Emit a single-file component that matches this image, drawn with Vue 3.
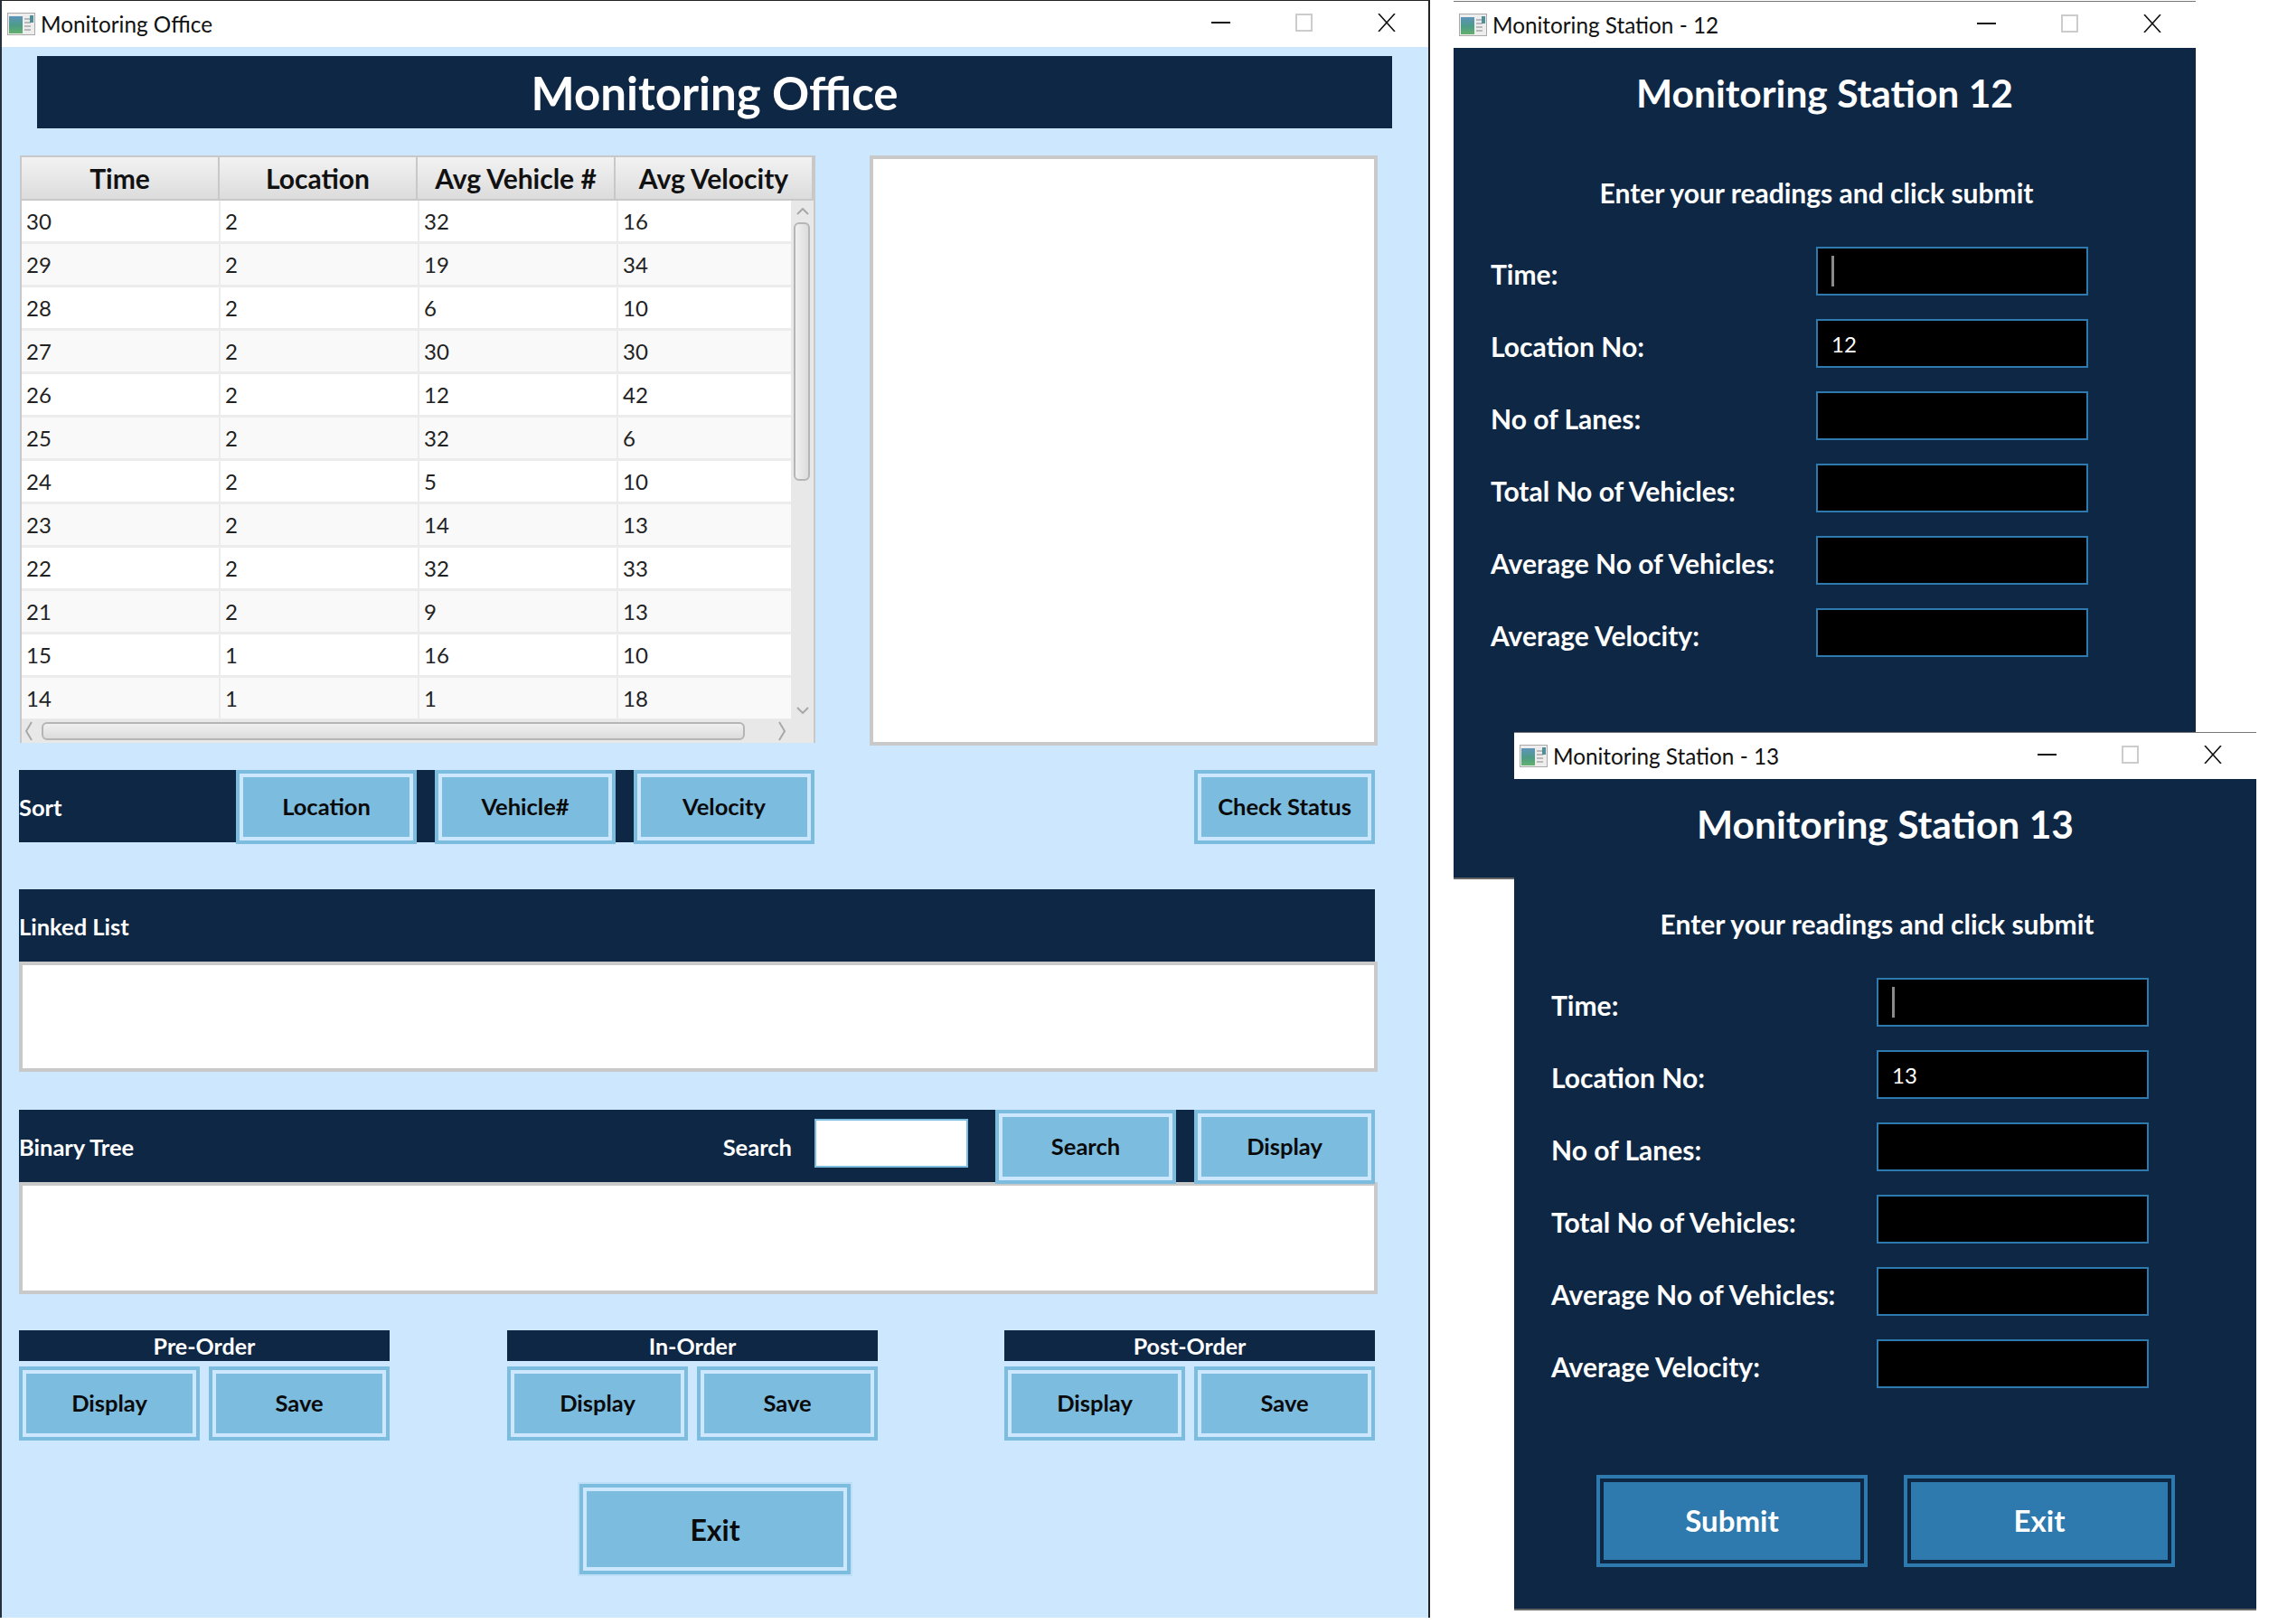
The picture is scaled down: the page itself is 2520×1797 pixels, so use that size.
<template>
  <div class="desktop">
    <!-- Office window -->
    <section class="window office">
      <header class="titlebar">
        <svg class="app-icon" viewBox="0 0 31 25">
          <defs>
            <linearGradient id="icon-fill" x1="0" y1="0" x2="0" y2="1">
              <stop offset="0" stop-color="#5f93bb" />
              <stop offset="0.55" stop-color="#4c9c86" />
              <stop offset="1" stop-color="#63b06d" />
            </linearGradient>
          </defs>
          <rect x="0.5" y="0.5" width="30" height="24" fill="#ededed" stroke="#a9a9a9" />
          <rect x="2" y="4" width="15" height="19" fill="url(#icon-fill)" />
          <path d="M19 7h6M19 11h7M19 15h7M19 19h7" stroke="#b9b9b9" stroke-width="2" />
          <rect x="25" y="3" width="4" height="8" fill="#4f8f9a" />
        </svg>
        <span class="title-text">Monitoring Office</span>
        <div class="controls">
          <span class="ctl"><i class="min"></i></span>
          <span class="ctl"><i class="max"></i></span>
          <span class="ctl">
            <svg class="close" viewBox="0 0 20 20"><path d="M1 0l18 20M19 0L1 20" stroke="#111" stroke-width="1.6" fill="none" /></svg>
          </span>
        </div>
      </header>

      <div class="office-body">
        <div class="banner">Monitoring Office</div>

        <div class="top-row">
          <div class="table">
            <div class="thead">
              <div v-for="h in headers" :key="h" class="th">{{ h }}</div>
            </div>
            <div class="tbody">
              <div class="rows">
                <div v-for="(row, i) in rows" :key="row[0]" class="tr" :class="{ alt: i % 2 === 1 }">
                  <div v-for="(c, j) in row" :key="j" class="td">{{ c }}</div>
                </div>
              </div>
              <div class="vscroll">
                <svg class="chev" viewBox="0 0 14 8"><path d="M1 7l6-6 6 6" fill="none" stroke="#a8a8a8" stroke-width="2" /></svg>
                <div class="vthumb"></div>
                <svg class="chev down" viewBox="0 0 14 8"><path d="M1 1l6 6 6-6" fill="none" stroke="#a8a8a8" stroke-width="2" /></svg>
              </div>
            </div>
            <div class="hscroll">
              <svg class="chev-h" viewBox="0 0 8 22"><path d="M7 1L1 11l6 10" fill="none" stroke="#a8a8a8" stroke-width="2" /></svg>
              <div class="hthumb"></div>
              <svg class="chev-h right" viewBox="0 0 8 22"><path d="M1 1l6 10L1 21" fill="none" stroke="#a8a8a8" stroke-width="2" /></svg>
            </div>
          </div>
          <div class="box status-box"></div>
        </div>

        <div class="sort-row">
          <div class="bar sort-bar">
            <span class="bar-label sort-label">Sort</span>
            <button class="btn">Location</button>
            <button class="btn">Vehicle#</button>
            <button class="btn">Velocity</button>
          </div>
          <button class="btn">Check Status</button>
        </div>

        <div class="bar list-bar"><span class="bar-label">Linked List</span></div>
        <div class="box wide-box"></div>

        <div class="bar tree-bar">
          <span class="bar-label">Binary Tree</span>
          <span class="bar-label search-label">Search</span>
          <div class="search-input"></div>
          <button class="btn">Search</button>
          <button class="btn">Display</button>
        </div>
        <div class="box wide-box tree-box"></div>

        <div class="orders">
          <div v-for="o in orders" :key="o" class="order">
            <div class="order-title">{{ o }}</div>
            <div class="order-btns">
              <button class="btn">Display</button>
              <button class="btn">Save</button>
            </div>
          </div>
        </div>

        <button class="btn exit-btn">Exit</button>
      </div>
    </section>

    <!-- Station windows -->
    <section v-for="s in stations" :key="s.no" class="window station" :class="'st-' + s.no">
      <header class="titlebar">
        <svg class="app-icon" viewBox="0 0 31 25">
          <rect x="0.5" y="0.5" width="30" height="24" fill="#ededed" stroke="#a9a9a9" />
          <rect x="2" y="4" width="15" height="19" fill="url(#icon-fill)" />
          <path d="M19 7h6M19 11h7M19 15h7M19 19h7" stroke="#b9b9b9" stroke-width="2" />
          <rect x="25" y="3" width="4" height="8" fill="#4f8f9a" />
        </svg>
        <span class="title-text">Monitoring Station - {{ s.no }}</span>
        <div class="controls">
          <span class="ctl"><i class="min"></i></span>
          <span class="ctl"><i class="max"></i></span>
          <span class="ctl">
            <svg class="close" viewBox="0 0 20 20"><path d="M1 0l18 20M19 0L1 20" stroke="#111" stroke-width="1.6" fill="none" /></svg>
          </span>
        </div>
      </header>

      <div class="station-body">
        <h1 class="station-title">Monitoring Station {{ s.no }}</h1>
        <p class="station-sub">Enter your readings and click submit</p>
        <div class="form">
          <div v-for="(f, i) in fields" :key="f" class="field">
            <label class="field-label">{{ f }}</label>
            <div class="field-input">
              <span v-if="i === 0" class="caret"></span>
              <span v-else-if="i === 1" class="field-value">{{ s.no }}</span>
            </div>
          </div>
        </div>
        <!-- station 12's buttons sit behind the window of station 13 -->
        <div v-if="s.no === 13" class="station-btns">
          <button class="sbtn">Submit</button>
          <button class="sbtn">Exit</button>
        </div>
      </div>
    </section>
  </div>
</template>

<script setup>
const headers = ['Time', 'Location', 'Avg Vehicle #', 'Avg Velocity']

const rows = [
  [30, 2, 32, 16],
  [29, 2, 19, 34],
  [28, 2, 6, 10],
  [27, 2, 30, 30],
  [26, 2, 12, 42],
  [25, 2, 32, 6],
  [24, 2, 5, 10],
  [23, 2, 14, 13],
  [22, 2, 32, 33],
  [21, 2, 9, 13],
  [15, 1, 16, 10],
  [14, 1, 1, 18]
]

const orders = ['Pre-Order', 'In-Order', 'Post-Order']

const stations = [{ no: 12 }, { no: 13 }]

const fields = [
  'Time:',
  'Location No:',
  'No of Lanes:',
  'Total No of Vehicles:',
  'Average No of Vehicles:',
  'Average Velocity:'
]
</script>

<style>
html, body {
  margin: 0;
  background: #fff;
}
</style>

<style scoped>
.desktop {
  position: relative;
  width: 2520px;
  height: 1797px;
  background: #fff;
  overflow: hidden;
  font-family: Lato, "Open Sans", sans-serif;
}

/* Windows */
.window {
  position: absolute;
  box-sizing: border-box;
}

.office {
  left: 0;
  top: 0;
  width: 1582px;
  height: 1790px;
  background: #cde8fe;
  border-top: 1px solid #222;
  border-left: 2px solid #25303c;
  border-right: 2px solid #222;
}

.station {
  background: #0e2745;
  width: 821px;
  height: 972px;
  border-bottom: 2px solid #666;
}

.st-12 {
  left: 1608px;
  top: 1px;
  border-top: 1px solid #777;
}

.st-13 {
  left: 1675px;
  top: 810px;
  border-top: 1px solid #777;
}

.titlebar {
  display: flex;
  align-items: center;
  height: 51px;
  background: #fff;
  padding-left: 6px;
}

.app-icon {
  width: 31px;
  height: 25px;
  margin-right: 6px;
}

.title-text {
  font-size: 24.3px;
  color: #111;
}

.controls {
  display: flex;
  margin-left: auto;
}

.station .controls {
  margin-right: 2px;
}

.ctl {
  width: 92px;
  height: 51px;
  display: flex;
  align-items: center;
  justify-content: center;
}

.min {
  display: block;
  width: 21px;
  height: 2px;
  background: #111;
  margin-top: -4px;
}

.max {
  display: block;
  box-sizing: border-box;
  width: 19px;
  height: 20px;
  border: 2px solid #ccc;
  margin-top: -4px;
}

.close {
  width: 20px;
  height: 20px;
  margin-top: -4px;
}

/* Office body */
.office-body {
  padding: 10px 0 0 19px;
}

.banner {
  margin-left: 20px;
  width: 1499px;
  height: 80px;
  background: #0e2745;
  color: #fff;
  font-size: 51px;
  font-weight: 700;
  display: flex;
  align-items: center;
  justify-content: center;
}

.top-row {
  display: flex;
  gap: 60px;
  margin: 30px 0 0 1px;
}

.table {
  box-sizing: border-box;
  width: 880px;
  height: 650px;
  border: 2px solid #c8c8c8;
  background: #e9e9e9;
}

.thead {
  display: flex;
  height: 46px;
  border-bottom: 2px solid #c8c8c8;
}

.th {
  box-sizing: border-box;
  width: 220px;
  display: flex;
  align-items: center;
  justify-content: center;
  font-size: 30px;
  font-weight: 700;
  color: #111;
  background: linear-gradient(#f2f2f2, #dcdcdc);
  border-right: 2px solid #c8c8c8;
}

.tbody {
  display: flex;
  height: 574px;
  overflow: hidden;
}

.rows {
  width: 851px;
  flex: none;
}

.tr {
  display: flex;
  height: 48px;
  box-sizing: border-box;
  background: #fff;
  border-bottom: 3px solid #ececec;
}

.tr.alt {
  background: #f9f9f9;
}

.td {
  box-sizing: border-box;
  flex: none;
  width: 220px;
  padding-left: 5px;
  border-right: 2px solid #ececec;
  font-size: 24px;
  line-height: 45px;
  color: #222;
}

.td:last-child {
  width: 191px;
  border-right: none;
}

.vscroll {
  position: relative;
  flex: 1;
  background: #e8e8e8;
}

.chev {
  position: absolute;
  left: 6px;
  top: 8px;
  width: 14px;
  height: 8px;
}

.chev.down {
  top: auto;
  bottom: 6px;
}

.vthumb {
  position: absolute;
  left: 3px;
  top: 24px;
  width: 18px;
  height: 286px;
  box-sizing: border-box;
  border: 2px solid #b5b5b5;
  border-radius: 6px;
  background: linear-gradient(90deg, #f0f0f0, #dcdcdc);
}

.hscroll {
  display: flex;
  align-items: center;
  height: 26px;
  background: #e8e8e8;
  padding: 0 0 0 4px;
}

.chev-h {
  width: 8px;
  height: 22px;
}

.chev-h.right {
  margin-left: 37px;
}

.hthumb {
  box-sizing: border-box;
  margin-left: 10px;
  width: 778px;
  height: 20px;
  border: 2px solid #b5b5b5;
  border-radius: 6px;
  background: linear-gradient(#f0f0f0, #dcdcdc);
}

.box {
  box-sizing: border-box;
  background: #fff;
  border: 4px solid #c9c9c9;
}

.status-box {
  width: 562px;
  height: 653px;
}

.sort-row {
  display: flex;
  justify-content: space-between;
  width: 1500px;
  height: 82px;
  margin-top: 27px;
}

.bar {
  background: #0e2745;
  display: flex;
  height: 80px;
}

.sort-bar {
  width: 880px;
  gap: 20px;
}

.bar-label {
  color: #fff;
  font-size: 25.5px;
  font-weight: 700;
  line-height: 82px;
}

.sort-label {
  width: 220px;
}

.list-bar {
  width: 1500px;
  margin-top: 50px;
}

.wide-box {
  width: 1503px;
  height: 122px;
}

.tree-bar {
  width: 1500px;
  margin-top: 42px;
}

.search-label {
  margin-left: auto;
  margin-right: 25px;
}

.search-input {
  box-sizing: border-box;
  width: 170px;
  height: 54px;
  margin: 10px 30px 0 0;
  background: #fff;
  border: 2px solid #7cbcdf;
}

.tree-bar .btn + .btn {
  margin-left: 20px;
}

.tree-box {
  height: 124px;
}

/* Buttons */
.btn {
  box-sizing: border-box;
  flex: none;
  width: 200px;
  height: 82px;
  padding: 0;
  font: 700 25.5px Lato, "Open Sans", sans-serif;
  color: #0a0a0a;
  background: #7cbcdf;
  outline: 4px solid #cde8fe;
  outline-offset: -8px;
  border: 4px solid #7cbcdf;
  border-bottom-width: 6px;
  position: relative;
}

.orders {
  display: flex;
  gap: 130px;
  width: 1500px;
  margin-top: 40px;
}

.order {
  width: 410px;
}

.order:last-child {
  margin-left: auto;
}

.order-title {
  height: 34px;
  background: #0e2745;
  color: #fff;
  font-size: 25px;
  font-weight: 700;
  line-height: 34px;
  text-align: center;
}

.order-btns {
  display: flex;
  justify-content: space-between;
  margin-top: 6px;
}

.exit-btn {
  display: block;
  width: 300px;
  height: 100px;
  margin: 48px 0 0 620px;
  font-size: 32px;
  border-bottom-width: 4px;
  box-shadow: 0 0 0 2px #bcdff5;
}

/* Station body */
.station-body {
  display: flex;
  flex-direction: column;
}

.station-title {
  margin: 23px 0 0;
  font-size: 42.5px;
  font-weight: 700;
  line-height: 54px;
  color: #fff;
  text-align: center;
}

.station-sub {
  margin: 65px 18px 0 0;
  font-size: 30px;
  font-weight: 700;
  line-height: 36px;
  color: #fff;
  text-align: center;
}

.form {
  display: flex;
  flex-direction: column;
  gap: 26px;
  margin-top: 42px;
  padding-left: 41px;
}

.field {
  display: flex;
  align-items: center;
  height: 54px;
}

.field-label {
  width: 360px;
  color: #fff;
  font-size: 30px;
  font-weight: 700;
  padding-top: 5px;
}

.field-input {
  box-sizing: border-box;
  width: 301px;
  height: 54px;
  display: flex;
  align-items: center;
  padding-left: 15px;
  background: #000;
  border: 2px solid #2e79ad;
}

.caret {
  width: 3px;
  height: 34px;
  background: #8a8a8a;
}

.field-value {
  color: #fff;
  font-size: 24px;
}

.station-btns {
  display: flex;
  gap: 40px;
  margin-top: 96px;
  padding-left: 91px;
}

.sbtn {
  box-sizing: border-box;
  width: 300px;
  height: 102px;
  padding: 0;
  font: 700 33px Lato, "Open Sans", sans-serif;
  color: #fff;
  background: #2e79ad;
  border: 4px solid #2e79ad;
  border-bottom-width: 6px;
  outline: 4px solid #0e2745;
  outline-offset: -8px;
}
</style>
